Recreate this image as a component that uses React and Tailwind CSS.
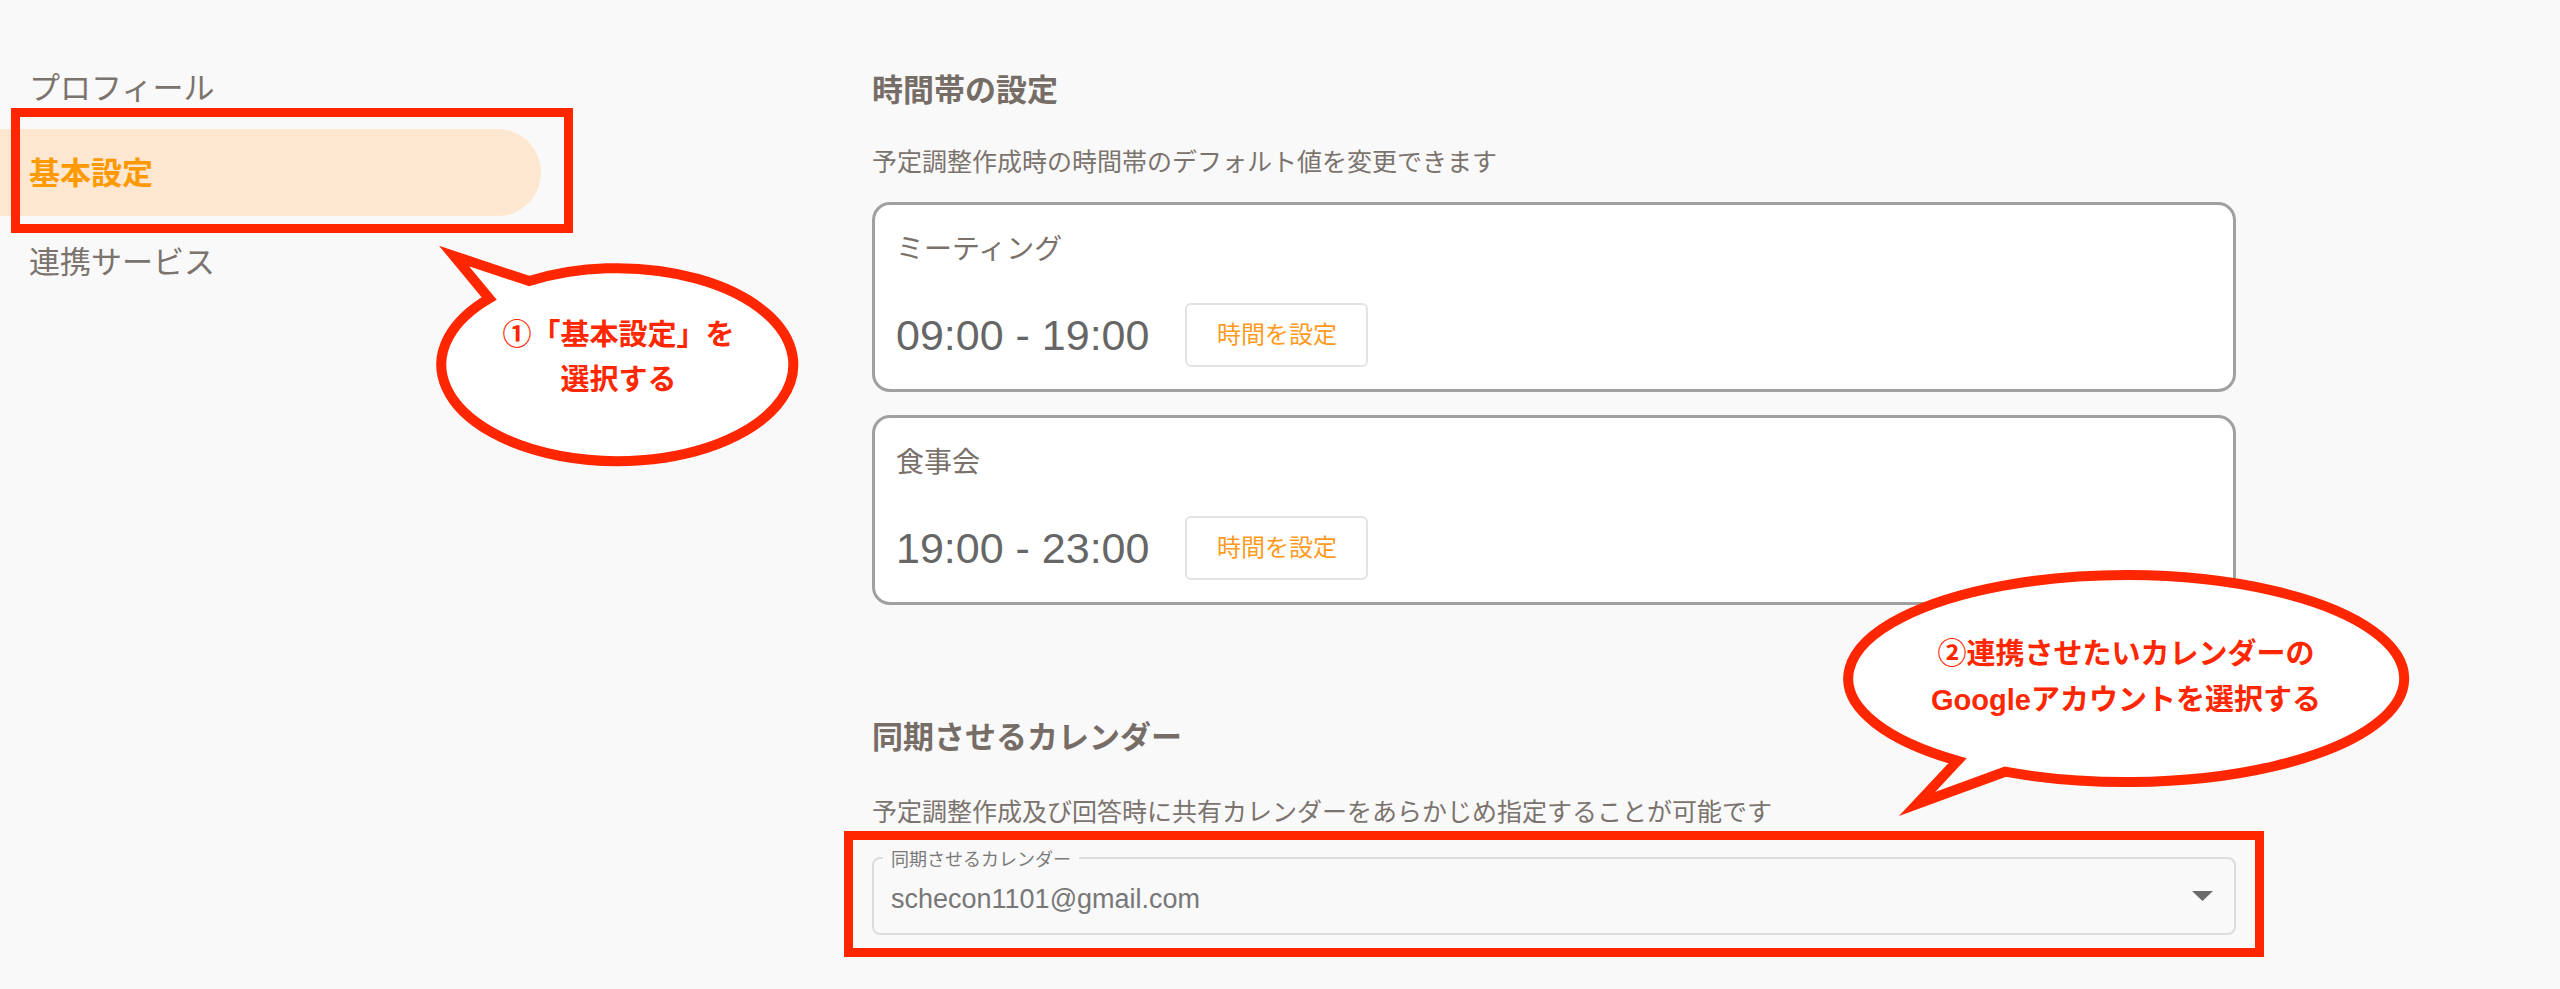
const FONT = { fontFamily: '"Liberation Sans", "Noto Sans CJK JP", sans-serif' }

const RED = '#ff2600'

function NavItem({ label, active, offset }) {
  if (active) {
    return (
      <div className={`flex h-[87px] w-[541px] items-center rounded-r-full bg-[#fde7d0] pl-[29px] text-[31px] font-bold text-[#ff9900] ${offset}`}>
        {label}
      </div>
    )
  }
  return (
    <div className={`flex h-[87px] items-center pl-[29px] text-[31px] text-[#7b736e] ${offset}`}>
      {label}
    </div>
  )
}

function TimeCard({ title, range }) {
  return (
    <div className="rounded-[18px] border-[3px] border-[#a0a0a0] bg-white px-[21px] pt-[24px] pb-[22px]">
      <p className="text-[28px] leading-[42px] text-[#7a716b]">{title}</p>
      <div className="mt-[32px] flex items-center gap-[36px]">
        <span className="text-[43px] leading-none text-[#666666]">{range}</span>
        <button
          type="button"
          className="flex h-[64px] w-[183px] items-center justify-center rounded-[6px] border-2 border-[#e3e3e3] bg-white text-[24px] text-[#ff9a1f]"
        >
          時間を設定
        </button>
      </div>
    </div>
  )
}

function Bubbles() {
  return (
    <svg
      className="pointer-events-none absolute left-0 top-0"
      width="2560"
      height="989"
      viewBox="0 0 2560 989"
    >
      <path
        d="M 489.2 298.5 A 176 96.5 0 1 0 529.3 281.1 L 454 256 Z"
        fill="#ffffff"
        stroke={RED}
        strokeWidth="10"
        strokeMiterlimit="12"
        strokeLinejoin="miter"
      />
      <path
        d="M 1957.5 760.8 A 278 103.5 0 1 1 2005.1 771.7 L 1917 804 Z"
        fill="#ffffff"
        stroke={RED}
        strokeWidth="10"
        strokeMiterlimit="12"
        strokeLinejoin="miter"
      />
    </svg>
  )
}

export default function App() {
  return (
    <div
      className="relative h-[989px] w-[2560px] overflow-hidden bg-[#f9f9f9]"
      style={FONT}
    >
      <div className="flex items-start">
        <aside className="w-[872px] shrink-0 pt-[42px]">
          <NavItem label="プロフィール" offset="pt-[8px]" />
          <NavItem label="基本設定" active offset="pt-[3px]" />
          <NavItem label="連携サービス" offset="pt-[8px]" />
        </aside>

        <main className="w-[1364px] pt-[68px]">
          <h2 className="text-[31px] font-bold leading-[46px] text-[#766d67]">
            時間帯の設定
          </h2>
          <p className="mt-[29px] text-[25px] leading-[38px] text-[#7b736e]">
            予定調整作成時の時間帯のデフォルト値を変更できます
          </p>
          <div className="mt-[21px] flex flex-col gap-[23px]">
            <TimeCard title="ミーティング" range="09:00 - 19:00" />
            <TimeCard title="食事会" range="19:00 - 23:00" />
          </div>

          <h2 className="mt-[110px] text-[31px] font-bold leading-[46px] text-[#766d67]">
            同期させるカレンダー
          </h2>
          <p className="mt-[32px] text-[25px] leading-[38px] text-[#7b736e]">
            予定調整作成及び回答時に共有カレンダーをあらかじめ指定することが可能です
          </p>
          <div className="relative mt-[26px] flex h-[78px] items-center justify-between rounded-[8px] border-2 border-[#dcdcdc] pl-[17px] pr-[21px]">
            <span className="absolute left-[9px] -top-[11px] bg-[#f9f9f9] px-[8px] text-[18px] leading-[24px] text-[#7a7a7a]">
              同期させるカレンダー
            </span>
            <span className="pt-[6px] text-[27px] text-[#777777]">
              schecon1101@gmail.com
            </span>
            <svg width="21" height="10" viewBox="0 0 21 10">
              <polygon points="0,0 21,0 10.5,10" fill="#6b6b6b" />
            </svg>
          </div>
        </main>
      </div>

      {/* annotations */}
      <div className="absolute left-[11px] top-[108px] h-[125px] w-[562px] border-[9px] border-[#ff2600]" />
      <div className="absolute left-[844px] top-[831px] h-[126px] w-[1420px] border-[9px] border-[#ff2600]" />
      <Bubbles />
      <div className="absolute left-[437px] top-[313px] w-[363px] text-center text-[29px] font-bold leading-[45px] text-[#ff2600]">
        <p>①「基本設定」を</p>
        <p>選択する</p>
      </div>
      <div className="absolute left-[1843px] top-[631px] w-[566px] text-center text-[29px] font-bold leading-[46px] text-[#ff2600]">
        <p>②連携させたいカレンダーの</p>
        <p>Googleアカウントを選択する</p>
      </div>
    </div>
  )
}
